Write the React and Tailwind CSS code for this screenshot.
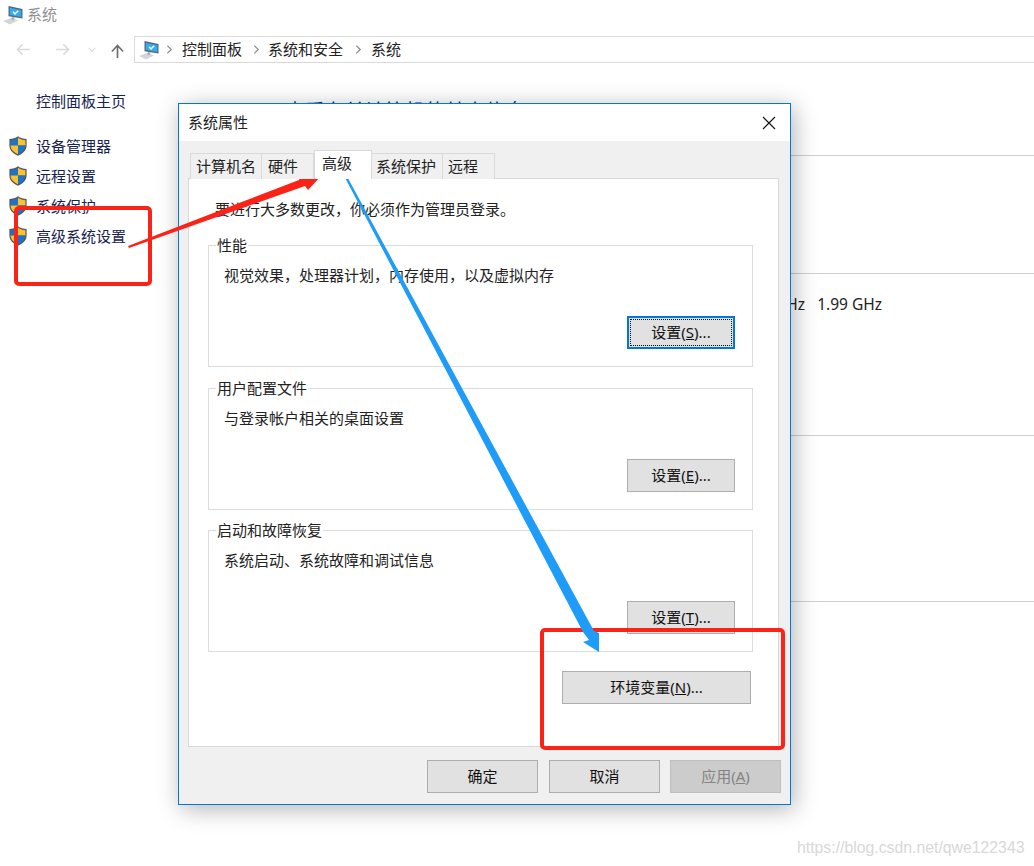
function PcIcon({ className }) {
  return (
    <svg viewBox="0 0 20 20" className={className}>
      <path d="M0 16 L8 13 L15 15.5 L7 19.5 Z" fill="#d3d5d8" />
      <path d="M9 12 L11.5 12.5 L11 15 L8 14.5 Z" fill="#a9adb3" />
      <path d="M5.5 1 L19.5 4 L19.5 13.5 L5.5 11.2 Z" fill="#56677d" />
      <path d="M6.8 2.8 L18.3 5.2 L18.3 12 L6.8 10 Z" fill="#31aeea" />
      <path d="M10 6.8 L12 9 L15.2 5.8" stroke="#ffffff" strokeWidth="1.5" fill="none" />
    </svg>
  );
}

function Shield({ className }) {
  return (
    <svg viewBox="0 0 18 20" className={className}>
      <path d="M9 0.3 C6.5 2.2 3.6 3 0.4 3 L0.4 9.5 C0.4 14.5 4.4 17.8 9 19.7 C13.6 17.8 17.6 14.5 17.6 9.5 L17.6 3 C14.4 3 11.5 2.2 9 0.3 Z" fill="#55585c" />
      <path d="M9 1.8 L9 9.5 L1.6 9.5 L1.6 4.2 C4.2 4.1 6.8 3.4 9 1.8 Z" fill="#1b74cc" />
      <path d="M9 1.8 C11.2 3.4 13.8 4.1 16.4 4.2 L16.4 9.5 L9 9.5 Z" fill="#fbc22b" />
      <path d="M1.6 9.5 L9 9.5 L9 18.2 C5 16.5 1.7 13.7 1.6 9.5 Z" fill="#fbc22b" />
      <path d="M9 9.5 L16.4 9.5 C16.3 13.7 13 16.5 9 18.2 Z" fill="#1b74cc" />
    </svg>
  );
}

function Chevron() {
  return (
    <svg viewBox="0 0 8 12" className="w-[7px] h-[11px]">
      <path d="M1.5 1.5 L6 6 L1.5 10.5" stroke="#8a8a8a" strokeWidth="1.4" fill="none" />
    </svg>
  );
}

function SideItem({ children }) {
  return (
    <div className="flex items-center h-[30px]">
      <Shield className="w-[18px] h-[20px] ml-[9px] mr-[9px] shrink-0" />
      <span className="text-[#17234f] text-[15px]">{children}</span>
    </div>
  );
}

function Btn({ children, className = "" }) {
  return (
    <div className={`flex items-center justify-center bg-[#e1e1e1] border border-[#adadad] text-[#111] text-[15px] ${className}`}>
      {children}
    </div>
  );
}

function Group({ title, desc, className = "", button }) {
  return (
    <div className={`relative h-[122px] border border-[#dcdcdc] pl-[15px] ${className}`}>
      <span className="absolute left-[7px] -top-[11px] bg-white px-px text-[15px] leading-[20px] text-[#222]">{title}</span>
      <div className="pt-[19px] text-[15px] leading-[20px] text-[#222]">{desc}</div>
      {button}
    </div>
  );
}

function Tab({ children, className = "" }) {
  return (
    <div className={`flex items-center h-[26px] border border-b-0 border-[#d9d9d9] bg-[#f0f0f0] text-[15px] text-[#222] ${className}`}>
      {children}
    </div>
  );
}

export default function App() {
  return (
    <div
      className="relative w-[1034px] h-[866px] overflow-hidden bg-white"
      style={{ fontFamily: '"Noto Sans", "Noto Sans CJK SC", sans-serif' }}
    >
      {/* title */}
      <div className="flex items-center h-[30px] pl-[3px]">
        <PcIcon className="w-[20px] h-[20px]" />
        <span className="ml-[4px] text-[15px] leading-[20px] -mt-[2px] text-[#8f8f8f]">系统</span>
      </div>

      {/* nav */}
      <div className="flex items-center h-[27px] mt-[6px]">
        <div className="w-[134px] shrink-0 flex items-center pl-[16px]">
          <svg viewBox="0 0 16 14" className="w-[15px] h-[13px]"><path d="M15 7 H2 M7 1.5 L1.5 7 L7 12.5" stroke="#dadada" strokeWidth="1.6" fill="none" /></svg>
          <svg viewBox="0 0 16 14" className="w-[15px] h-[13px] ml-[24px]"><path d="M1 7 H14 M9 1.5 L14.5 7 L9 12.5" stroke="#dadada" strokeWidth="1.6" fill="none" /></svg>
          <svg viewBox="0 0 10 6" className="w-[8px] h-[5px] ml-[18px]"><path d="M1 1 L5 5 L9 1" stroke="#dadada" strokeWidth="1.4" fill="none" /></svg>
          <svg viewBox="0 0 16 16" className="w-[15px] h-[15px] ml-[14px] mt-[3px]"><path d="M8 15 V2 M2 8 L8 1.5 L14 8" stroke="#6f6f6f" strokeWidth="1.8" fill="none" /></svg>
        </div>
        <div className="flex-1 h-[27px] flex items-center border border-r-0 border-[#d9d9d9] pl-[4px] text-[15px] text-[#222]">
          <PcIcon className="w-[20px] h-[20px]" />
          <span className="ml-[7px]"><Chevron /></span>
          <span className="ml-[9px]">控制面板</span>
          <span className="ml-[11px]"><Chevron /></span>
          <span className="ml-[8px]">系统和安全</span>
          <span className="ml-[12px]"><Chevron /></span>
          <span className="ml-[9px]">系统</span>
        </div>
      </div>

      {/* content */}
      <div className="flex">
        <div className="w-[285px] shrink-0">
          <div className="pl-[36px] pt-[27px] h-[68px] text-[15px] leading-[22px] text-[#17234f]">控制面板主页</div>
          <SideItem>设备管理器</SideItem>
          <SideItem>远程设置</SideItem>
          <SideItem>系统保护</SideItem>
          <SideItem>高级系统设置</SideItem>
        </div>
        <div className="flex-1">
          <div className="h-[93px] pt-[35px] text-[20px] leading-[28px] text-[#003399] border-b border-[#cfcfcf]">查看有关计算机的基本信息</div>
          <div className="h-[118px] border-b border-[#cfcfcf]" />
          <div className="h-[162px] border-b border-[#cfcfcf] pt-[18px] pl-[490px] text-[15.5px] leading-[24px] text-[#222] whitespace-pre">GHz   1.99 GHz</div>
          <div className="h-[166px] border-b border-[#cfcfcf]" />
        </div>
      </div>

      {/* dialog window */}
      <div className="absolute left-[178px] top-[103px] w-[613px] h-[702px] flex flex-col bg-[#f0f0f0] border border-[#0078d7] shadow-[3px_4px_22px_rgba(0,0,0,0.3)]">
        <div className="flex items-center justify-between h-[37px] bg-white pl-[9px] pr-[14px] shrink-0">
          <span className="text-[15px] text-[#222]">系统属性</span>
          <svg viewBox="0 0 14 14" className="w-[14px] h-[14px]"><path d="M1 1 L13 13 M13 1 L1 13" stroke="#111" strokeWidth="1.1" fill="none" /></svg>
        </div>

        <div className="pl-[9px] pr-[11px] pt-[10px]">
          <div className="relative z-10 flex items-end h-[28px] pl-[2px] -mb-px">
            <Tab className="w-[72px] pl-[5px]">计算机名</Tab>
            <Tab className="w-[52px] border-l-0 pl-[6px]">硬件</Tab>
            <div className="w-[58px] h-[29px] border border-b-0 border-[#d9d9d9] bg-white text-[15px] leading-[22px] text-[#222] pl-[7px] pt-[1px]">高级</div>
            <Tab className="w-[71px] border-l-0 pl-[4px]">系统保护</Tab>
            <Tab className="w-[52px] border-l-0 pl-[5px]">远程</Tab>
          </div>
          <div className="h-[569px] border border-[#d9d9d9] bg-white pl-[19px] pr-[25px]">
            <div className="pt-[20px] pl-[7px] h-[66px] text-[15px] leading-[20px] text-[#222]">要进行大多数更改，你必须作为管理员登录。</div>
            <Group
              title="性能"
              desc="视觉效果，处理器计划，内存使用，以及虚拟内存"
              button={
                <div className="absolute right-[17px] top-[70px] w-[108px] h-[33px] border-2 border-[#0078d7] bg-[#e1e1e1] p-px">
                  <div className="flex items-center justify-center h-full border border-dotted border-[#111] text-[15px] text-[#111]">
                    设置(<span className="underline">S</span>)...
                  </div>
                </div>
              }
            />
            <Group
              title="用户配置文件"
              desc="与登录帐户相关的桌面设置"
              className="mt-[21px]"
              button={<Btn className="absolute right-[17px] top-[70px] w-[108px] h-[33px]">设置(<span className="underline">E</span>)...</Btn>}
            />
            <Group
              title="启动和故障恢复"
              desc="系统启动、系统故障和调试信息"
              className="mt-[20px]"
              button={<Btn className="absolute right-[17px] top-[70px] w-[108px] h-[33px]">设置(<span className="underline">T</span>)...</Btn>}
            />
            <div className="flex justify-end mt-[19px] mr-[2px]">
              <Btn className="w-[189px] h-[33px]">环境变量(<span className="underline">N</span>)...</Btn>
            </div>
          </div>
        </div>

        <div className="flex justify-end pr-[9px] mt-[13px]">
          <Btn className="w-[111px] h-[33px]">确定</Btn>
          <Btn className="w-[111px] h-[33px] ml-[11px] mr-[10px]">取消</Btn>
          <div className="flex items-center justify-center w-[111px] h-[33px] bg-[#cccccc] border border-[#bfbfbf] text-[15px] text-[#838383]">
            应用(<span className="underline">A</span>)
          </div>
        </div>
      </div>

      {/* annotations */}
      <div className="absolute left-[14px] top-[206px] w-[138px] h-[80px] border-4 border-[#fb2318] rounded-[5px]" />
      <div className="absolute left-[540px] top-[628px] w-[245px] h-[122px] border-4 border-[#fb2318] rounded-[5px]" />
      <svg className="absolute left-0 top-0 w-[1034px] h-[866px] pointer-events-none" viewBox="0 0 1034 866">
        <polygon points="128,246 299,180 302,173 322,175 308,190 305,186 129,248" fill="#fb2318" />
        <polygon points="341,170 343.5,170 594,631 599,633 599,652 583,642 589,640 583,632" fill="#1e9cf7" />
      </svg>

      {/* watermark */}
      <div
        className="absolute left-[797px] top-[836px] text-[15.8px] leading-[24px] text-[#d8d8d8] whitespace-nowrap"
        style={{ fontFamily: '"Liberation Sans", sans-serif' }}
      >
        https://blog.csdn.net/qwe122343
      </div>
    </div>
  );
}
